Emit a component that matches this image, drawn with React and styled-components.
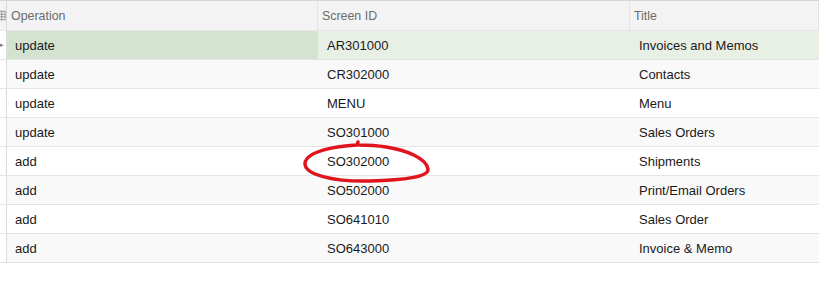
import styled, { createGlobalStyle } from "styled-components";

const GlobalStyle = createGlobalStyle`
  body {
    margin: 0;
    background: #ffffff;
    font-family: "Liberation Sans", Arial, sans-serif;
  }
`;

const Page = styled.div`
  position: relative;
  width: 819px;
  height: 283px;
  overflow: hidden;
`;

const Grid = styled.div`
  border-top: 1px solid #d6d6d6;
  display: grid;
  grid-template-columns: 7px 311px 312px 1fr;
`;

const HeadCell = styled.div`
  height: 30px;
  box-sizing: border-box;
  background: #f3f3f3;
  border-right: 1px solid #e2e2e2;
  border-bottom: 1px solid #e6e6e6;
  color: #6b6b6b;
  font-size: 12.4px;
  display: flex;
  align-items: center;
  padding-left: 4px;
  white-space: nowrap;
  &:last-child {
    border-right: none;
  }
`;

const GutterHead = styled(HeadCell)`
  padding-left: 0;
  overflow: hidden;
  border-right: 1px solid #d8d8d8;
`;

const Cell = styled.div`
  height: 29px;
  box-sizing: border-box;
  border-bottom: 1px solid #e4e4e4;
  font-size: 13px;
  color: #1a1a1a;
  display: flex;
  align-items: center;
  padding-left: ${(p) => p.$pad || 8}px;
  white-space: nowrap;
  background: ${(p) =>
    p.$selected ? (p.$current ? "#d3e3d0" : "#e8efe5") : p.$odd ? "#f9f9f9" : "#ffffff"};
`;

const Gutter = styled(Cell)`
  padding-left: 0;
  border-right: 1px solid #dadada;
  background: #ffffff;
  color: #777;
  font-size: 7px;
  justify-content: flex-start;
`;

const Overlay = styled.svg`
  position: absolute;
  left: 0;
  top: 0;
  pointer-events: none;
`;

const rows = [
  ["update", "AR301000", "Invoices and Memos"],
  ["update", "CR302000", "Contacts"],
  ["update", "MENU", "Menu"],
  ["update", "SO301000", "Sales Orders"],
  ["add", "SO302000", "Shipments"],
  ["add", "SO502000", "Print/Email Orders"],
  ["add", "SO641010", "Sales Order"],
  ["add", "SO643000", "Invoice & Memo"],
];

const GridIcon = () => (
  <svg width="7" height="11" viewBox="0 0 7 11">
    <rect x="-2" y="0.5" width="8" height="10" fill="none" stroke="#8a8a8a" strokeWidth="1" />
    <line x1="-2" y1="4" x2="6" y2="4" stroke="#8a8a8a" />
    <line x1="-2" y1="7" x2="6" y2="7" stroke="#8a8a8a" />
    <line x1="2" y1="0" x2="2" y2="11" stroke="#8a8a8a" />
  </svg>
);

export default function App() {
  return (
    <Page>
      <GlobalStyle />
      <Grid>
        <GutterHead>
          <GridIcon />
        </GutterHead>
        <HeadCell>Operation</HeadCell>
        <HeadCell>Screen ID</HeadCell>
        <HeadCell>Title</HeadCell>
        {rows.map((r, i) => {
          const sel = i === 0;
          const odd = i % 2 === 1;
          return [
            <Gutter key={`g${i}`}>{sel ? "▸" : ""}</Gutter>,
            <Cell key={`o${i}`} $selected={sel} $current $odd={odd}>
              {r[0]}
            </Cell>,
            <Cell key={`s${i}`} $selected={sel} $odd={odd} $pad={9}>
              {r[1]}
            </Cell>,
            <Cell key={`t${i}`} $selected={sel} $odd={odd} $pad={9}>
              {r[2]}
            </Cell>,
          ];
        })}
      </Grid>
      <Overlay width="819" height="283">
        <path
          d="M 358 142 L 357 145 C 336 146, 307 151, 305 163 C 304 175, 335 182, 370 181 C 404 180, 429 177, 428 169 C 426 158, 406 150, 386 147 C 374 145, 366 145, 359 145"
          fill="none"
          stroke="#e0141c"
          strokeWidth="3.5"
          strokeLinecap="round"
          strokeLinejoin="round"
        />
      </Overlay>
    </Page>
  );
}
